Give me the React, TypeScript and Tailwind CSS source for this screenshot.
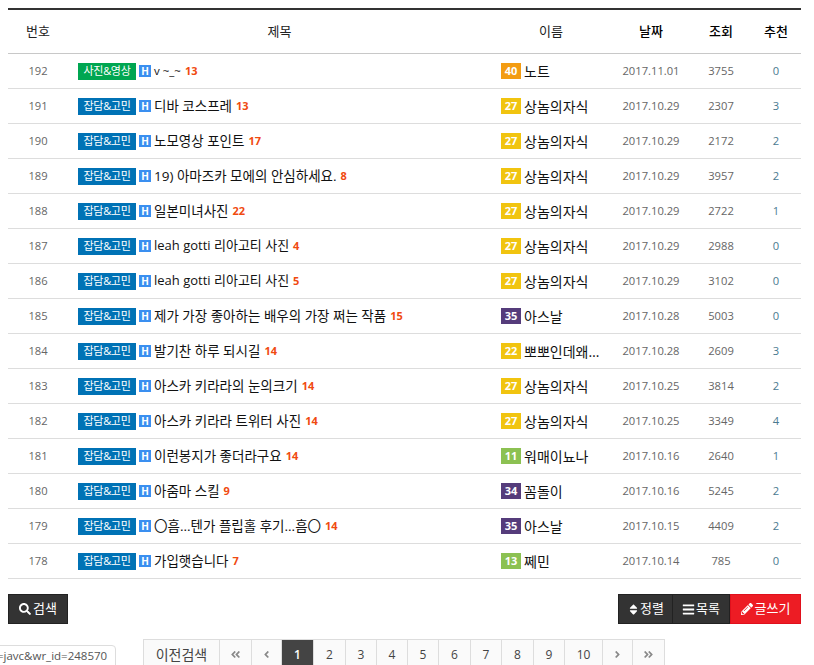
import React from "react";
import { FaSearch, FaSort, FaBars, FaPencilAlt, FaAngleLeft, FaAngleRight, FaAngleDoubleLeft, FaAngleDoubleRight } from "react-icons/fa";

const font = { fontFamily: '"Open Sans","Noto Sans CJK KR",sans-serif' };
type Row = [number, string, string, number, string, string, string, string, number];
const N = "상놈의자식";
const rows: Row[] = [
  [192, "사진&영상", "v ~_~", 13, "40", "노트", "#f39c12", "2017.11.01", 3755],
  [191, "잡담&고민", "디바 코스프레", 13, "27", N, "#f1c40f", "2017.10.29", 2307],
  [190, "잡담&고민", "노모영상 포인트", 17, "27", N, "#f1c40f", "2017.10.29", 2172],
  [189, "잡담&고민", "19) 아마즈카 모에의 안심하세요.", 8, "27", N, "#f1c40f", "2017.10.29", 3957],
  [188, "잡담&고민", "일본미녀사진", 22, "27", N, "#f1c40f", "2017.10.29", 2722],
  [187, "잡담&고민", "leah gotti 리아고티 사진", 4, "27", N, "#f1c40f", "2017.10.29", 2988],
  [186, "잡담&고민", "leah gotti 리아고티 사진", 5, "27", N, "#f1c40f", "2017.10.29", 3102],
  [185, "잡담&고민", "제가 가장 좋아하는 배우의 가장 쩌는 작품", 15, "35", "아스날", "#553c7b", "2017.10.28", 5003],
  [184, "잡담&고민", "발기찬 하루 되시길", 14, "22", "뽀뽀인데왜…", "#f1c40f", "2017.10.28", 2609],
  [183, "잡담&고민", "아스카 키라라의 눈의크기", 14, "27", N, "#f1c40f", "2017.10.25", 3814],
  [182, "잡담&고민", "아스카 키라라 트위터 사진", 14, "27", N, "#f1c40f", "2017.10.25", 3349],
  [181, "잡담&고민", "이런봉지가 좋더라구요", 14, "11", "워매이뇨나", "#8cc152", "2017.10.16", 2640],
  [180, "잡담&고민", "아줌마 스킬", 9, "34", "꼼돌이", "#553c7b", "2017.10.16", 5245],
  [179, "잡담&고민", "〇흠...텐가 플립홀 후기...흠〇", 14, "35", "아스날", "#553c7b", "2017.10.15", 4409],
  [178, "잡담&고민", "가입햇습니다", 7, "13", "쩨민", "#8cc152", "2017.10.14", 785],
];
const recs = [0, 3, 2, 2, 1, 0, 0, 0, 3, 2, 4, 1, 2, 2, 0];

const titleSize = (t: string) =>
  t.startsWith("v ") ? "text-[11.5px]" : t.startsWith("leah") ? "text-[13px]" : "text-[13.5px]";

const pages: [React.ReactNode, string][] = [
  ["이전검색", "w-[76px]"],
  [<FaAngleDoubleLeft key="a" className="text-[11px] text-[#888]" />, "w-[32px]"],
  [<FaAngleLeft key="b" className="text-[11px] text-[#888]" />, "w-[30px]"],
  ["1", "w-[32px]"],
  ["2", "w-[32px]"],
  ["3", "w-[31px]"],
  ["4", "w-[31px]"],
  ["5", "w-[31px]"],
  ["6", "w-[32px]"],
  ["7", "w-[31px]"],
  ["8", "w-[32px]"],
  ["9", "w-[31px]"],
  ["10", "w-[38px]"],
  [<FaAngleRight key="c" className="text-[11px] text-[#888]" />, "w-[30px]"],
  [<FaAngleDoubleRight key="d" className="text-[11px] text-[#888]" />, "w-[32px]"],
];

export default function App() {
  return (
    <div className="relative h-[665px] w-[814px] overflow-hidden bg-white px-[8px] pt-[8px] text-[12px] text-[#333]" style={font}>
      <div className="w-[793px] border-t-2 border-[#333]">
        <div className="flex h-[44px] items-center border-b border-[#c8c8c8] text-center text-[13px] text-[#222]">
          <div className="w-[60px]">번호</div>
          <div className="w-[423px]">제목</div>
          <div className="w-[120px]">이름</div>
          <div className="w-[80px] font-medium text-black">날짜</div>
          <div className="w-[60px] font-medium text-black">조회</div>
          <div className="w-[50px] font-medium text-black">추천</div>
        </div>
        {rows.map((r, i) => (
          <div key={r[0]} className="flex h-[35px] items-center border-b border-[#ddd] text-[11.2px] text-[#666]">
            <div className="w-[60px] text-center">{r[0]}</div>
            <div className="flex w-[423px] items-center pl-[10px] text-[#111]">
              <span className={`mr-[3px] flex h-[17px] w-[58px] items-center justify-center text-[11px] tracking-[-0.3px] text-white ${i === 0 ? "bg-[#00a651]" : "bg-[#0072b5]"}`}>{r[1]}</span>
              <span className="mr-[3px] flex h-[12px] w-[12px] items-center justify-center border border-[#3a8ff0] bg-[#3a8ff0] text-[10px] font-bold leading-none text-white">H</span>
              <span className={`whitespace-nowrap ${titleSize(r[2])}`}>{r[2]}</span>
              <span className="ml-[4px] text-[11px] font-bold text-[#f04a10]">{r[3]}</span>
            </div>
            <div className="flex w-[120px] items-center pl-[10px] text-[14px] text-[#111]">
              <span className="mr-[3px] flex h-[16px] w-[20px] items-center justify-center text-[11px] font-bold text-white" style={{ backgroundColor: r[6] }}>{r[4]}</span>
              <span className="whitespace-nowrap">{r[5]}</span>
            </div>
            <div className="w-[80px] text-center">{r[7]}</div>
            <div className="w-[60px] text-center">{r[8]}</div>
            <div className="w-[50px] text-center text-[#4a7a90]">{recs[i]}</div>
          </div>
        ))}
      </div>

      <div className="mt-[15px] flex w-[793px] justify-between text-[13px] text-white">
        <div className="flex h-[30px] w-[60px] items-center justify-center gap-[2px] border border-[#222] bg-[#333]">
          <FaSearch className="text-[12px]" />검색
        </div>
        <div className="flex h-[30px]">
          <div className="flex w-[55px] items-center justify-center border border-[#222] bg-[#333]"><FaSort className="text-[13px]" />정렬</div>
          <div className="flex w-[57px] items-center justify-center gap-[1px] border border-l-0 border-[#222] bg-[#333]"><FaBars className="text-[13px]" />목록</div>
          <div className="flex w-[71px] items-center justify-center gap-[2px] border border-[#e0101c] bg-[#ed1c24]"><FaPencilAlt className="text-[12px]" />글쓰기</div>
        </div>
      </div>

      <div className="mt-[15px] ml-[135px] flex h-[30px] w-max border-l border-t border-[#ddd] text-[12px] text-[#444]">
        {pages.map(([p, w], i) => (
          <div key={i} className={`flex items-center justify-center border-r border-[#ddd] ${w} ${i === 0 ? "text-[14px]" : ""} ${p === "1" ? "bg-[#444] font-semibold text-white" : "bg-[#fafafa]"}`}>{p}</div>
        ))}
      </div>

      <div className="absolute bottom-[-1px] left-[-7px] flex h-[21px] items-center rounded-tr-[4px] border border-[#ddd] bg-white pl-[3px] pr-[8px] text-[11.5px] text-[#555]">=javc&amp;wr_id=248570</div>
    </div>
  );
}
